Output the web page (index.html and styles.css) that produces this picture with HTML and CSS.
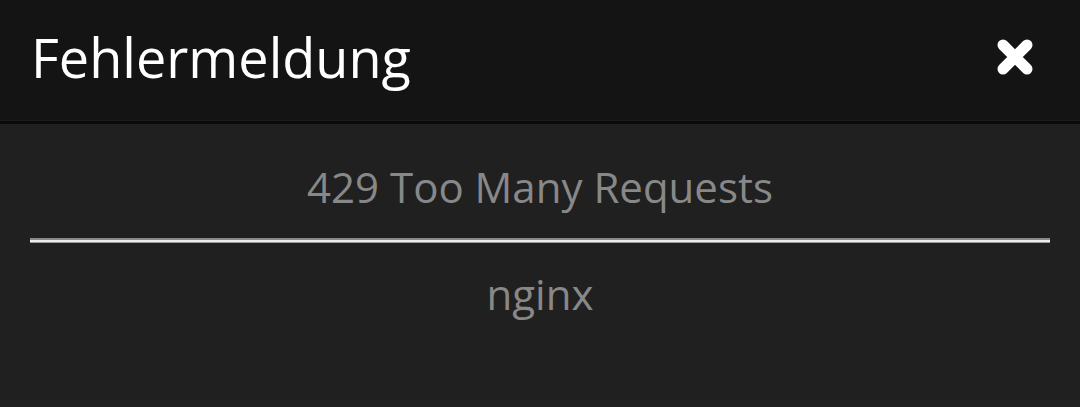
FILE: index.html
```html
<!DOCTYPE html>
<html lang="de">
<head>
<meta charset="utf-8">
<title>Fehlermeldung</title>
<link rel="stylesheet" href="styles.css">
</head>
<body>
<div class="dialog">
  <header class="dialog-header">
    <h2 class="dialog-title">Fehlermeldung</h2>
    <button class="close-btn" aria-label="Schließen">
      <svg width="38" height="38" viewBox="0 0 38 38"><path d="M7 7 L31 31 M31 7 L7 31" stroke="#fff" stroke-width="11" stroke-linecap="round" fill="none"/></svg>
    </button>
  </header>
  <div class="dialog-content">
    <h1 class="status">429 Too Many Requests</h1>
    <hr class="divider">
    <p class="server">nginx</p>
  </div>
</div>
</body>
</html>
```
FILE: styles.css
```css
html, body {
  margin: 0;
  padding: 0;
  height: 100%;
}
body {
  background: #202020;
  font-family: "Open Sans", "Noto Sans", sans-serif;
}
.dialog-header {
  height: 120px;
  background: #141414;
  display: flex;
  align-items: center;
  justify-content: space-between;
  padding: 0 46px 0 31px;
  border-bottom: 1px solid #1c1c1c;
  box-shadow: 0 1px 0 #0a0a0a, 0 3px 0 #0a0a0a;
}
.dialog-title {
  margin: 0;
  font-size: 54px;
  font-weight: 400;
  color: #fff;
  line-height: 76px;
  margin-top: -6px;
}
.close-btn {
  background: none;
  border: 0;
  padding: 0;
  display: flex;
  margin-top: -6px;
}
.dialog-content {
  padding: 37px 30px 0;
  text-align: center;
}
.status {
  margin: 0;
  font-size: 42px;
  font-weight: 400;
  line-height: 57px;
  color: #888;
}
.divider {
  margin: 23px 0 0;
  height: 2px;
  border: 0;
  border-top: 2px solid #8a8a8a;
  border-bottom: 1px solid #9a9a9a;
  background: #ececec;
}
.server {
  margin: 22px 0 0;
  font-size: 42px;
  line-height: 57px;
  color: #888;
}
```
